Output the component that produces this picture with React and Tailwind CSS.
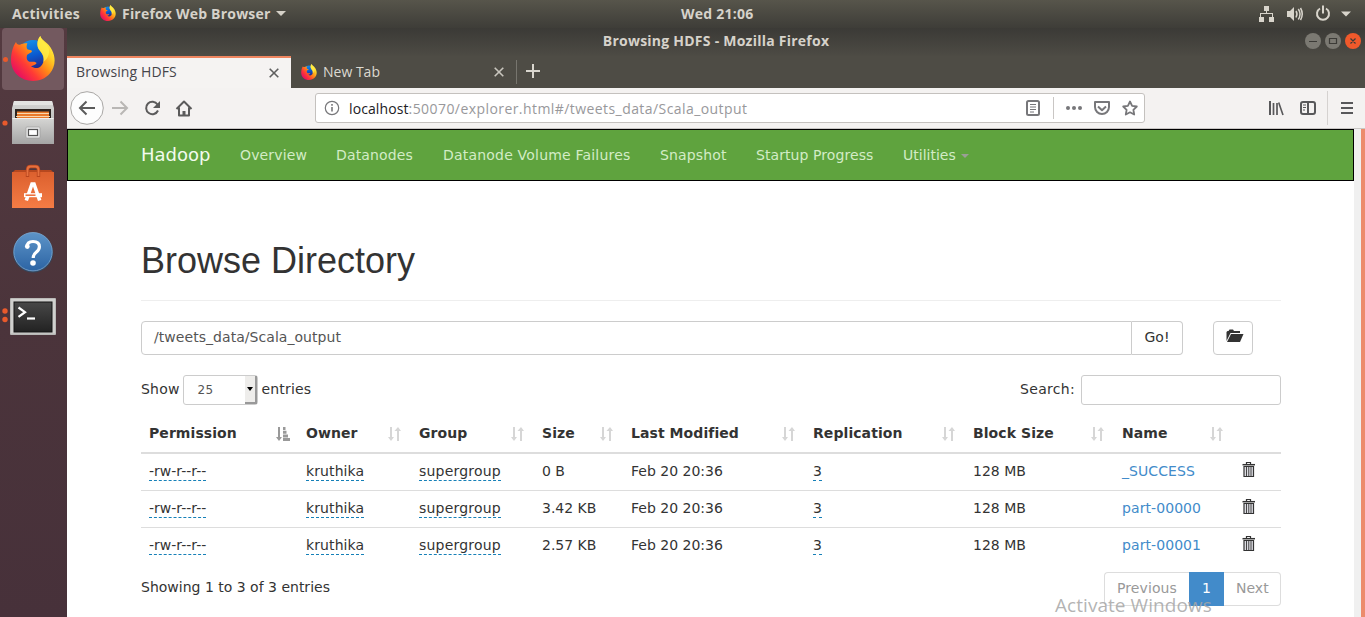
import React from "react";

const UI = "font-['Open_Sans','Noto_Sans',sans-serif]";

function FirefoxLogo({ id, className }) {
  return (
    <svg viewBox="0 0 132 135" className={className}>
      <defs>
        <linearGradient id={id + "f"} x1="0.95" y1="0.1" x2="0.15" y2="0.85">
          <stop offset="0" stopColor="#fff44f" />
          <stop offset="0.25" stopColor="#ffd226" />
          <stop offset="0.5" stopColor="#ff8a16" />
          <stop offset="0.75" stopColor="#ff3b35" />
          <stop offset="1" stopColor="#e8115f" />
        </linearGradient>
        <linearGradient id={id + "b"} x1="0.3" y1="0" x2="0.6" y2="1">
          <stop offset="0" stopColor="#1591e8" />
          <stop offset="0.5" stopColor="#0a5ad0" />
          <stop offset="1" stopColor="#2b1a78" />
        </linearGradient>
      </defs>
      <circle cx="66" cy="60" r="48" fill={`url(#${id}b)`} />
      <path
        d="M15 18C17 25 21 27 27 26C34 23 42 21 49 22C46 29 46 34 49 40C55 43 62 42 63 45C62 51 53 52 48 57C46 66 47 74 55 77C63 79 70 74 77 81C74 87 66 88 60 91C76 102 92 95 97 78C101 62 93 52 85 42C76 30 78 12 88 0C91 14 112 18 123 42C136 68 132 93 117 112C103 129 84 135 66 135C30 135 0 109 0 73C0 52 6 30 15 18Z"
        fill={`url(#${id}f)`}
      />
      <path d="M88 0C78 12 76 30 85 42C93 52 101 62 97 78C112 68 118 50 112 34C104 18 91 14 88 0Z" fill="#fff04a" opacity=".75" />
    </svg>
  );
}

function TopBar() {
  return (
    <header className={`${UI} grid h-7 shrink-0 grid-cols-[1fr_auto_1fr] items-center bg-linear-to-b from-[#57554b] to-[#3e3d38] text-[14px] font-bold text-[#d6d2ca]`}>
      <div className="flex items-center pl-3">
        <span className="w-[88px] pb-0.5 tracking-[0.3px]">Activities</span>
        <FirefoxLogo id="top" className="mt-[-2px] mr-[6px] size-4" />
        <span className="pb-0.5 tracking-[0.2px] whitespace-nowrap">Firefox Web Browser</span>
        <svg className="mt-[-2px] ml-[5px] h-[5px] w-[10px]" viewBox="0 0 10 5"><path d="M0 0h10L5 5z" fill="#d5d1c8" /></svg>
      </div>
      <span className="w-[73px] translate-x-[35px] pb-0.5 tracking-[0.25px] whitespace-nowrap">Wed 21:06</span>
      <div className="flex justify-end pr-[13px]">
        <svg width="94" height="20" viewBox="1258 4 94 20" fill="#d8d4cb">
          <path d="M1264 6h5v5h-2v2h6v4h1v5h-5v-5h3v-3h-11v3h3v5h-5v-5h1v-4h6v-2h-2z" />
          <path d="M1287 11h3l4-4v14l-4-4h-3z" />
          <path d="M1296 11q2 3 0 6.500M1298.300 9q3.500 5 0 10.500M1300.500 8q3.500 6 0 12" fill="none" stroke="#d8d4cb" strokeWidth="1.500" />
          <path d="M1320 8.500a6 6 0 1 0 6 0M1323 5.500v8" fill="none" stroke="#d8d4cb" strokeWidth="2" />
          <path d="M1341 11.500h10l-5 5z" />
        </svg>
      </div>
    </header>
  );
}

function Launcher() {
  return (
    <aside className="flex w-[67px] shrink-0 flex-col bg-linear-to-b from-[#543a40] via-[#4b343b] to-[#47313a]">
      <div className="flex h-16 w-[67px] pl-[2px]">
        <div className="flex h-[62px] w-[62px] items-center rounded bg-[#73595f]">
          <span className="ml-px size-[5px] rounded-full bg-[#e95a2c]" />
          <FirefoxLogo id="dock" className="-mt-px ml-[3px] h-[45px] w-[44px]" />
        </div>
      </div>
      <svg width="67" height="64" viewBox="0 92 67 64" className="shrink-0">
        <defs>
          <linearGradient id="cab" x1="0" y1="0" x2="0" y2="1"><stop offset="0" stopColor="#d6d6d4" /><stop offset="1" stopColor="#a5a5a5" /></linearGradient>
        </defs>
        <circle cx="5" cy="123" r="2.600" fill="#e95a2c" />
        <path d="M14 101h38l2 7v36H12v-36z" fill="url(#cab)" />
        <path d="M14 101h38l1 4H13z" fill="#e4e4e2" />
        <path d="M15 109h36v9H15z" fill="#2c2420" />
        <path d="M17 111.500h32v6.500H17z" fill="#e9792b" />
        <path d="M17 113.500h32M16 116.500h34" stroke="#f8d7ae" strokeWidth="1" />
        <path d="M12.500 118h41v26h-41z" fill="url(#cab)" />
        <path d="M12.500 118.500h41" stroke="#efefef" />
        <rect x="26" y="127" width="14" height="11" rx="1" fill="#e6e6e6" stroke="#999" strokeWidth=".6" />
        <rect x="28.500" y="129.500" width="9" height="6" fill="#fff" stroke="#555" strokeWidth="1.200" />
      </svg>
      <svg width="67" height="64" viewBox="0 156 67 64" className="shrink-0">
        <defs>
          <linearGradient id="bag" x1="0" y1="0" x2="0" y2="1"><stop offset="0" stopColor="#dc602e" /><stop offset="1" stopColor="#f47c45" /></linearGradient>
        </defs>
        <path d="M12 173l3-3h36l3 3z" fill="#b6481f" />
        <path d="M12 172h42v36H12z" fill="url(#bag)" />
        <path d="M27.500 177v-7q0-3.500 3-3.500h5q3 0 3 3.500v7" fill="none" stroke="#b9451d" strokeWidth="3.400" />
        <path d="M27.500 176v-6q0-3.500 3-3.500h5q3 0 3 3.500v6" fill="none" stroke="#e5713f" strokeWidth="1.800" />
        <path d="M26.300 200.500L32 184h2l5.700 16.500" fill="none" stroke="#fff" strokeWidth="3.600" />
        <path d="M24 195.200h18" stroke="#fff" strokeWidth="4" />
        <path d="M25.500 195.200h10" stroke="#ed7340" strokeWidth="1.600" />
      </svg>
      <svg width="67" height="64" viewBox="0 220 67 64" className="shrink-0">
        <defs>
          <linearGradient id="hlp" x1="0" y1="0" x2="0" y2="1"><stop offset="0" stopColor="#5d94c8" /><stop offset="1" stopColor="#2c64a4" /></linearGradient>
        </defs>
        <circle cx="33" cy="252.500" r="20" fill="#33475f" />
        <circle cx="33" cy="251.700" r="19.200" fill="url(#hlp)" stroke="#7fa9d2" strokeWidth=".8" />
        <path d="M27 247q0-5.500 6-5.500q6.400 0 6.400 5.300q0 3-3.200 5.400q-3 2.300-3 5.800" fill="none" stroke="#fff" strokeWidth="3.200" />
        <circle cx="27.300" cy="246.500" r="2.400" fill="#fff" />
        <circle cx="33" cy="263" r="2.800" fill="#fff" />
      </svg>
      <svg width="67" height="64" viewBox="0 284 67 64" className="shrink-0">
        <defs>
          <linearGradient id="trm" x1="0" y1="0" x2="0" y2="1"><stop offset="0" stopColor="#484848" /><stop offset="1" stopColor="#222" /></linearGradient>
        </defs>
        <circle cx="5" cy="311" r="2.700" fill="#e95a2c" />
        <circle cx="5" cy="319.500" r="2.700" fill="#e95a2c" />
        <rect x="10" y="298" width="46" height="37" rx="1" fill="#b9b9b7" />
        <rect x="11" y="299" width="44" height="34.500" fill="#d0d0ce" />
        <rect x="14" y="302" width="38" height="30" fill="url(#trm)" stroke="#151515" />
        <path d="M18.500 307.500l6.500 4.700l-6.500 4.700" fill="none" stroke="#fff" strokeWidth="2.200" />
        <path d="M27 318.500h8" stroke="#fff" strokeWidth="2.200" />
      </svg>
    </aside>
  );
}

function TitleBar() {
  return (
    <div className={`${UI} grid h-7 grid-cols-[1fr_auto_1fr] items-center bg-linear-to-b from-[#3b3a36] to-[#4d4b44] text-[14px] font-bold text-[#d6d2ca]`}>
      <span />
      <span className="mt-[-4px] tracking-[0.24px] whitespace-nowrap">Browsing HDFS - Mozilla Firefox</span>
      <svg width="60" height="20" viewBox="1305 32 60 20" className="justify-self-end">
        <circle cx="1313" cy="41" r="8" fill="#7b7972" />
        <circle cx="1333" cy="41" r="8" fill="#7b7972" />
        <circle cx="1353" cy="41" r="8" fill="#f0592b" />
        <path d="M1309 41.500h8M1329.500 38.500h7v5h-7zM1350.500 38.500l5 5M1355.500 38.500l-5 5" stroke="#3c3b37" strokeWidth="1.200" fill="none" />
      </svg>
    </div>
  );
}

function Cross({ color, className }) {
  return (
    <svg viewBox="0 0 10 10" className={`size-[10px] ${className ?? ""}`}>
      <path d="M.7.7l8.600 8.600M9.300.7L.7 9.300" stroke={color} strokeWidth="1.600" />
    </svg>
  );
}

function Tabs() {
  return (
    <div className={`${UI} flex h-8 bg-[#4e4c45] text-[14px]`}>
      <div className="flex w-[224px] items-center justify-between border-t-2 border-[#ee855f] bg-[#f5f3f2] pr-[12px] pb-px pl-[9px] text-[#45454a]">
        <span className="pb-0.5 tracking-[0.1px] whitespace-nowrap">Browsing HDFS</span>
        <Cross color="#5f5f5f" />
      </div>
      <div className="my-1 flex w-[226px] items-center border-r border-[#77756e] pr-[12px] pl-[10px] text-[#dcd9d1]">
        <FirefoxLogo id="tab" className="mr-[6px] size-4" />
        <span className="pb-0.5">New Tab</span>
        <Cross color="#c9c6be" className="ml-auto" />
      </div>
      <svg viewBox="0 0 14 14" className="mt-[8px] ml-[9px] size-[14px]"><path d="M7 0v14M0 7h14" stroke="#d9d6ce" strokeWidth="2" /></svg>
    </div>
  );
}

function Toolbar() {
  return (
    <div className={`${UI} flex h-10 items-center bg-[#f4f2f1]`}>
      <svg width="248" height="40" viewBox="67 88 248 40" fill="none" stroke="#5b5b5b" strokeWidth="2" className="shrink-0">
        <circle cx="87" cy="108" r="16.300" fill="#fdfdfd" stroke="#a9a7a5" strokeWidth="1" />
        <path d="M95 108H80M86.500 101.500L80 108l6.500 6.500" />
        <path d="M112 108h15M120.500 101.500L127 108l-6.500 6.500" stroke="#b9b7b5" />
        <path d="M157.500 104.500a6.200 6.200 0 1 0 .5 6" />
        <path d="M160 101v7h-7z" fill="#5b5b5b" stroke="none" />
        <path d="M176.500 109l7.500-7.500l7.500 7.500M179 107.500v8h10v-8" strokeLinejoin="round" />
        <path d="M184 116v-5" strokeWidth="3" />
      </svg>
      <div className="flex h-[30px] w-[830px] shrink-0 items-center rounded-[3px] border border-[#c4c1be] bg-white text-[14px]">
        <svg width="16" height="16" viewBox="0 0 16 16" className="ml-2 shrink-0" fill="none" stroke="#77777a">
          <circle cx="8" cy="8" r="6.700" strokeWidth="1.200" />
          <path d="M8 7v4.500M8 4v1.700" strokeWidth="1.600" />
        </svg>
        <span className="ml-[9px] tracking-[0.43px] whitespace-nowrap text-[#98989b]"><span className="tracking-[0.1px] text-[#202024]">localhost</span>:50070/explorer.html#/tweets_data/Scala_output</span>
        <svg width="125" height="28" viewBox="1019 94 125 28" fill="none" stroke="#77777a" strokeWidth="2" className="ml-auto shrink-0">
          <rect x="1027" y="101" width="12" height="14" rx="1.500" />
          <path d="M1030 104.500h6M1030 107h6M1030 109.500h6M1030 112h4" strokeWidth="1" />
          <path d="M1053.500 97v22" stroke="#c9c6c4" strokeWidth="1" />
          <g fill="#77777a" stroke="none"><circle cx="1068" cy="108" r="2" /><circle cx="1074" cy="108" r="2" /><circle cx="1080" cy="108" r="2" /></g>
          <path d="M1095 102h14v5a7 7 0 0 1-14 0zM1098 106.500l4 3.700l4-3.700" strokeLinejoin="round" />
          <path d="M1130 101.500l2.100 4.300l4.700.7l-3.400 3.300l.8 4.700l-4.200-2.200l-4.200 2.200l.8-4.700l-3.400-3.300l4.700-.7z" strokeWidth="1.800" strokeLinejoin="round" />
        </svg>
      </div>
      <svg width="105" height="40" viewBox="1260 88 105 40" fill="none" stroke="#58585a" strokeWidth="2" className="ml-auto shrink-0">
        <path d="M1270 101v14" />
        <path d="M1273.500 103v12M1277 103v12" strokeWidth="1.700" />
        <path d="M1278.700 102.500l4.300 12.500" strokeWidth="1.600" />
        <rect x="1301" y="102" width="14" height="12" rx="2" />
        <path d="M1308 102v12" />
        <path d="M1303 105h3M1303 107.500h3M1303 110h2" strokeWidth="1" />
        <path d="M1327.500 91v34" stroke="#d5d2d0" strokeWidth="1" />
        <path d="M1341 103h12M1341 108h12M1341 113h12" />
      </svg>
    </div>
  );
}

function Navbar() {
  return (
    <nav className="flex h-[52px] shrink-0 items-center border border-black bg-[#5fa33e] pl-[73px] text-[14px] text-[#d3ecc6]">
      <span className="w-[99px] pb-px text-[18px] text-[#f2fbee]">Hadoop</span>
      <div className="grid grid-cols-[96px_107px_217px_96px_147px_auto] tracking-[0.15px] whitespace-nowrap">
        <span>Overview</span>
        <span>Datanodes</span>
        <span className="tracking-[0.2px]">Datanode Volume Failures</span>
        <span>Snapshot</span>
        <span className="tracking-[0.08px]">Startup Progress</span>
        <span className="flex items-center tracking-normal">
          Utilities
          <svg className="mt-0.5 ml-[5px] h-1 w-2" viewBox="0 0 8 4"><path d="M0 0h8L4 4z" fill="#9a9f96" /></svg>
        </span>
      </div>
    </nav>
  );
}

function SortIcon({ active }) {
  return active ? (
    <svg width="14" height="14" viewBox="0 0 14 14" fill="#999" className="shrink-0">
      <path d="M2 0h2v10h2L3 14L0 10h2zM7 0h2.500v3H7zM7 3.700h3.500v3H7zM7 7.400h5v3H7zM7 11.100h7v2.900H7z" />
    </svg>
  ) : (
    <svg width="14" height="14" viewBox="0 0 14 14" fill="#d6d6d6" className="shrink-0">
      <path d="M3 0h2v10h2L4 14L1 10h2zM10 14V4H7.500L11 0l3 4h-2v10z" />
    </svg>
  );
}

const columns = ["Permission", "Owner", "Group", "Size", "Last Modified", "Replication", "Block Size", "Name"];
const files = [
  { size: "0 B", name: "_SUCCESS" },
  { size: "3.42 KB", name: "part-00000" },
  { size: "2.57 KB", name: "part-00001" },
];
const GRID = "grid grid-cols-[157px_113px_123px_89px_182px_160px_149px_119px_48px]";

function Editable({ children, className }) {
  return <span className={`border-b border-dashed border-[#1580b8] pb-px leading-[17px] ${className ?? ""}`}>{children}</span>;
}

function Trash() {
  return (
    <svg width="14" height="16" viewBox="0 0 14 16" fill="none" stroke="#333">
      <path d="M4.500 2.500v-2h4v2" strokeWidth="1.200" />
      <path d="M.5 2.700h12.500" strokeWidth="1.500" />
      <path d="M2 4.500h9.500v10h-9.500z" fill="#dcdce2" strokeWidth="1.200" />
      <path d="M4.500 5v9M6.750 5v9M9 5v9" strokeWidth=".9" />
    </svg>
  );
}

function FileTable() {
  return (
    <div className="mt-[8px] text-[14px] leading-5">
      <div className={`${GRID} h-[41px] border-b-2 border-[#ddd] font-bold`}>
        {columns.map((c, i) => (
          <div key={c} className={`flex items-center justify-between pl-2 tracking-[0.07px] whitespace-nowrap ${i === 0 ? "pr-[8px]" : "pr-[10px]"}`}>
            <span>{c}</span>
            <span className="pt-[3px]"><SortIcon active={i === 0} /></span>
          </div>
        ))}
      </div>
      {files.map((f, i) => (
        <div key={f.name} className={`${GRID} h-[37px] pt-[7px] *:pl-2 ${i < 2 ? "border-b border-[#ddd]" : ""}`}>
          <div><Editable>-rw-r--r--</Editable></div>
          <div><Editable className="tracking-[0.1px]">kruthika</Editable></div>
          <div><Editable className="tracking-[0.2px]">supergroup</Editable></div>
          <div>{f.size}</div>
          <div>Feb 20 20:36</div>
          <div><Editable>3</Editable></div>
          <div>128 MB</div>
          <div className="tracking-[0.08px] text-[#428bca]">{f.name}</div>
          <div className="ml-px pt-px"><Trash /></div>
        </div>
      ))}
    </div>
  );
}

function Explorer() {
  return (
    <main className="ml-[74px] w-[1140px] pt-[60px]">
      <h1 className="h-[60px] border-b border-[#eee] font-['Liberation_Sans',Arial,sans-serif] text-[36px] leading-[40px]">Browse Directory</h1>
      <div className="mt-5 flex h-[34px] text-[14px]">
        <div className="flex w-[991px] items-center rounded-l border border-[#ccc] pl-3 text-[#555]"><span className="-mt-0.5 tracking-[0.05px]">/tweets_data/Scala_output</span></div>
        <button className="w-[51px] rounded-r border border-l-0 border-[#ccc] pb-0.5">Go!</button>
        <button className="ml-[30px] flex w-10 items-center justify-center rounded border border-[#ccc]">
          <svg width="18" height="14" viewBox="0 0 18 14" fill="#333" className="-mt-1 ml-[3px]">
            <path d="M.5 12V3l1-1h1l1-1.500h3.500L8 2h6v2H4.500zM1 13L5 5h12.500L14 13z" />
          </svg>
        </button>
      </div>
      <div className="mt-5 flex h-[30px] items-center text-[14px]">
        <span className="-mt-0.5 tracking-[0.2px]">Show</span>
        <div className="ml-[3px] flex h-[30px] w-[75px] items-center rounded-[3px] border border-[#ccc] text-[12px] text-[#555]">
          <span className="pl-[14px] tracking-[0.3px]">25</span>
          <span className="ml-auto flex h-full w-[12px] items-center justify-center border-r-2 border-b-2 border-[#999] bg-[#eeedeb]">
            <svg className="h-1 w-[6px]" viewBox="0 0 6 4"><path d="M0 0h6L3 4z" fill="#000" /></svg>
          </span>
        </div>
        <span className="-mt-0.5 ml-[4px] tracking-[0.15px]">entries</span>
        <span className="-mt-0.5 ml-auto tracking-[0.3px]">Search:</span>
        <div className="ml-[6px] h-[30px] w-[200px] rounded-[3px] border border-[#ccc]" />
      </div>
      <FileTable />
      <div className="mt-[7px] flex justify-between text-[14px]">
        <span className="pt-[5px] leading-5">Showing 1 to 3 of 3 entries</span>
        <div className="relative flex h-[34px] leading-[30px] text-[#999]">
          <span className="w-[85px] rounded-l border border-r-0 border-[#ddd] pl-3 tracking-[0.1px]">Previous</span>
          <span className="w-[35px] bg-[#428bca] pt-px text-center text-white">1</span>
          <span className="w-[57px] rounded-r border border-l-0 border-[#ddd] pl-3">Next</span>
          <span className="absolute top-[20px] -left-[49px] font-['Open_Sans','Noto_Sans',sans-serif] text-[19px] leading-[26px] tracking-[0.05px] whitespace-nowrap text-[#a6a6a6]/85">Activate Windows</span>
        </div>
      </div>
    </main>
  );
}

export default function App() {
  return (
    <div className="flex h-[617px] w-[1365px] flex-col overflow-hidden bg-white">
      <TopBar />
      <div className="flex min-h-0 flex-1">
        <Launcher />
        <div className="flex min-w-0 flex-1 flex-col">
          <TitleBar />
          <Tabs />
          <Toolbar />
          <div className="flex min-h-0 flex-1 border-t border-[#c9c7c5] font-['DejaVu_Sans',sans-serif] text-[#333]">
            <div className="min-w-0 flex-1">
              <Navbar />
              <Explorer />
            </div>
            <div className="w-[7px] bg-[#f0f0f0]" />
            <div className="w-1 bg-[#ec8c6c]" />
          </div>
        </div>
      </div>
    </div>
  );
}
